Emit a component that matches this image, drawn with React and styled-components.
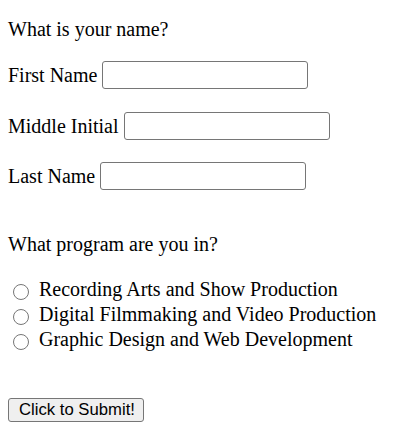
import styled, { createGlobalStyle } from 'styled-components';

const GlobalStyle = createGlobalStyle`
    body{
        margin: 0;
        background: #ffffff;
        color: #000000;
        font-family: "Liberation Serif", "Times New Roman", serif;
        font-size: 20px;
    }
`;

const Form = styled.form`
    display: flex;
    flex-direction: column;
    align-items: flex-start;
    padding: 18px 8px 0 8px;
`;

const Question = styled.p`
    margin: ${(p) => p.$top || 0}px 0 0 0;
    line-height: 23px;
`;

const FieldRow = styled.label`
    display: flex;
    align-items: center;
    gap: 5px;
    height: 28px;
    line-height: 22px;
    margin-top: ${(p) => p.$top}px;
`;

const TextInput = styled.input`
    box-sizing: border-box;
    width: 206px;
    height: 28px;
    margin: 0;
    padding: 1px 3px;
    border: 1px solid #767676;
    border-radius: 3px;
    background: #ffffff;
    font-family: "Liberation Sans", Arial, sans-serif;
    font-size: 17px;
`;

const RadioList = styled.div`
    display: flex;
    flex-direction: column;
    margin-top: 21px;
`;

const RadioRow = styled.label`
    display: flex;
    align-items: flex-start;
    gap: 10px;
    height: 25px;
    line-height: 25px;
    padding-left: 5px;
`;

const Radio = styled.input`
    appearance: none;
    box-sizing: border-box;
    width: 16px;
    height: 16px;
    margin: 7px 0 0 0;
    border: 1px solid #767676;
    border-radius: 50%;
    background: #ffffff;
`;

const SubmitButton = styled.button`
    margin-top: 46px;
    height: 24px;
    padding: 0 8px 0 10px;
    border: 1px solid #767676;
    border-radius: 3px;
    background: #efefef;
    color: #000000;
    font-family: "Liberation Sans", Arial, sans-serif;
    font-size: 16.7px;
    line-height: 22px;
`;

const programs = [
    'Recording Arts and Show Production',
    'Digital Filmmaking and Video Production',
    'Graphic Design and Web Development',
];

const App = () => {
    return (
        <>
            <GlobalStyle />
            <Form onSubmit={(e) => e.preventDefault()}>
                <Question>What is your name?</Question>
                <FieldRow $top={20}>First Name<TextInput type="text" /></FieldRow>
                <FieldRow $top={23}>Middle Initial<TextInput type="text" /></FieldRow>
                <FieldRow $top={22}>Last Name<TextInput type="text" /></FieldRow>

                <Question $top={43}>What program are you in?</Question>
                <RadioList>
                    {programs.map((name) => (
                        <RadioRow key={name}>
                            <Radio type="radio" name="program" value={name} />
                            {name}
                        </RadioRow>
                    ))}
                </RadioList>

                <SubmitButton type="submit">Click to Submit!</SubmitButton>
            </Form>
        </>
    );
};

export default App;
